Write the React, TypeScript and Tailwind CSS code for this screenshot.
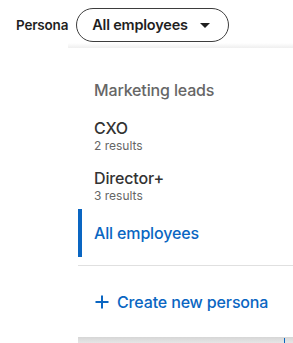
import React from "react";

export default function App() {
  return (
    <div
      className="relative w-[293px] h-[343px] overflow-hidden bg-white"
      style={{ fontFamily: "Inter, 'Noto Sans', sans-serif" }}
    >
      <div className="flex items-center pl-4 pt-2">
        <span className="text-[13.5px] font-semibold tracking-[-0.2px] text-[#1f1f1f] leading-[20px]">Persona</span>
        <button className="ml-2 flex h-[34px] items-center rounded-full border-[1.5px] border-[#3d3d3d] bg-white pl-[15px] pr-[15px]">
          <span className="text-[14.5px] font-semibold tracking-[-0.2px] leading-[20px] text-[#1f1f1f]">All employees</span>
          <svg width="16" height="16" viewBox="0 0 16 16" className="ml-[9px]">
            <path d="M3 6h10l-5 5z" fill="#1f1f1f" />
          </svg>
        </button>
      </div>
      <div className="mt-[1px] ml-[68px] h-[5px] bg-[linear-gradient(to_bottom,#ffffff,#efefef)]" />
      <div className="ml-[78px] w-[240px] bg-white">
        <div className="pl-4 pt-[31px]">
          <div className="text-[16px] font-medium tracking-[-0.15px] leading-[22px] text-[#666666]">Marketing leads</div>
          <div className="mt-4">
            <div className="text-[16px] font-medium tracking-[-0.15px] leading-[22px] text-[#333333]">CXO</div>
            <div className="text-[12px] leading-[14px] text-[#666666]">2 results</div>
          </div>
          <div className="mt-[14px]">
            <div className="text-[16px] font-medium tracking-[-0.15px] leading-[22px] text-[#333333]">Director+</div>
            <div className="text-[12px] leading-[14px] text-[#666666]">3 results</div>
          </div>
        </div>
        <div className="mt-[6px] flex h-12 items-center border-l-4 border-[#0a66c2] pl-3">
          <span className="text-[16px] font-medium tracking-[-0.15px] leading-[22px] text-[#0a66c2]">All employees</span>
        </div>
        <div className="mt-2 h-px bg-[#e0e0e0]" />
        <div className="flex h-[71px] items-center pl-4">
          <svg width="16" height="16" viewBox="0 0 16 16">
            <path d="M8 1.5v13M1.5 8h13" stroke="#0a66c2" strokeWidth="2" fill="none" />
          </svg>
          <span className="ml-[7px] text-[16px] font-medium tracking-[-0.15px] leading-[22px] text-[#0a66c2]">Create new persona</span>
        </div>
      </div>
      <div className="ml-[78px] h-[6px] bg-[linear-gradient(to_bottom,#d6d6d6,#e6e6e6)]" />
      <div className="absolute left-[284px] top-[338px] h-[5px] w-[1px] bg-[#0a66c2]" />
    </div>
  );
}
